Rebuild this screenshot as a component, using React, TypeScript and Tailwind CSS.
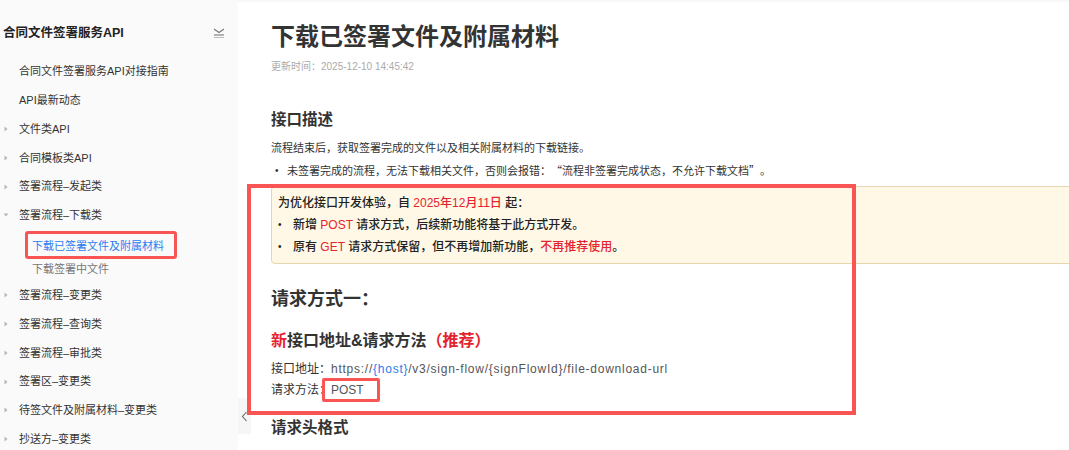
import React from 'react';

type NavItem = {
  label: string;
  caret?: 'right' | 'down';
  sub?: boolean;
  active?: boolean;
};

const topItems: NavItem[] = [
  { label: '合同文件签署服务API对接指南' },
  { label: 'API最新动态' },
  { label: '文件类API', caret: 'right' },
  { label: '合同模板类API', caret: 'right' },
  { label: '签署流程–发起类', caret: 'right' },
  { label: '签署流程–下载类', caret: 'down' },
];

const subItems: NavItem[] = [
  { label: '下载已签署文件及附属材料', sub: true, active: true },
  { label: '下载签署中文件', sub: true },
];

const restItems: NavItem[] = [
  { label: '签署流程–变更类', caret: 'right' },
  { label: '签署流程–查询类', caret: 'right' },
  { label: '签署流程–审批类', caret: 'right' },
  { label: '签署区–变更类', caret: 'right' },
  { label: '待签文件及附属材料–变更类', caret: 'right' },
  { label: '抄送方–变更类', caret: 'right' },
];

function Caret({ dir }: { dir: 'right' | 'down' }) {
  return (
    <svg width="6" height="6" viewBox="0 0 6 6" className="absolute left-[3px] top-1/2 -translate-y-1/2">
      {dir === 'right' ? (
        <path d="M1.5 0.5 L4.5 3 L1.5 5.5 Z" fill="#b5b5b5" />
      ) : (
        <path d="M0.5 1.5 L5.5 1.5 L3 4.5 Z" fill="#b5b5b5" />
      )}
    </svg>
  );
}

function NavRow({ item }: { item: NavItem }) {
  return (
    <div className={`relative flex items-center ${item.sub ? 'h-[23px]' : 'h-[28.8px]'}`}>
      {item.caret && <Caret dir={item.caret} />}
      <span
        className={`text-[11px] ${item.sub ? 'pl-[32px]' : 'pl-[19px]'} ${
          item.active ? 'text-[#2b7cf0]' : item.sub ? 'text-[#777]' : 'text-[#333]'
        }`}
      >
        {item.label}
      </span>
    </div>
  );
}

function Sidebar() {
  return (
    <aside className="w-[238px] h-[450px] shrink-0 overflow-hidden bg-[#fafafa]">
      <div className="h-[32px] mt-[17px] flex items-center justify-between pl-[3px] pr-[13px]">
        <span className="text-[12.5px] font-semibold text-[#222]">合同文件签署服务API</span>
        <svg width="12" height="11" viewBox="0 0 12 11" fill="none">
          <path d="M1 1 L6 4.5 L11 1" stroke="#777" strokeWidth="1.1" />
          <line x1="1" y1="7" x2="11" y2="7" stroke="#777" strokeWidth="1.1" />
          <line x1="1" y1="9.5" x2="11" y2="9.5" stroke="#bbb" strokeWidth="1" />
        </svg>
      </div>
      <nav className="mt-[8px]">
        {topItems.map((item, i) => (
          <NavRow key={`t${i}`} item={item} />
        ))}
        <div className="pt-[5px]">
          {subItems.map((item, i) => (
            <NavRow key={`s${i}`} item={item} />
          ))}
        </div>
        {restItems.map((item, i) => (
          <NavRow key={`r${i}`} item={item} />
        ))}
      </nav>
    </aside>
  );
}

const cjk = "font-['Noto_Sans_CJK_SC',sans-serif] inline-block w-[11px]";

function Main() {
  return (
    <main className="relative flex-1 h-[450px] overflow-hidden bg-white pl-[33px] shadow-[inset_0_3px_3px_-2px_rgba(0,0,0,0.06)]">
      <div className="absolute left-0 top-[398px] w-[13px] h-[36px] bg-[#f6f6f6] flex items-center justify-center">
        <svg width="7" height="11" viewBox="0 0 7 11" fill="none">
          <path d="M5.5 1 L1.5 5.5 L5.5 10" stroke="#666" strokeWidth="1.1" />
        </svg>
      </div>

      <h1 className="pt-[21px] text-[24px] leading-[32px] font-bold text-[#333]">下载已签署文件及附属材料</h1>
      <div className="mt-[7px] text-[10px] leading-[14px] text-[#aaa]">更新时间：2025-12-10 14:45:42</div>

      <h2 className="mt-[34px] text-[15.5px] leading-[24px] font-bold text-[#333]">接口描述</h2>
      <p className="mt-[6px] text-[11px] leading-[20px] text-[#333]">流程结束后，获取签署完成的文件以及相关附属材料的下载链接。</p>
      <ul className="mt-[2px] text-[11px] leading-[20px] text-[#333]">
        <li className="flex items-center">
          <span className="w-[16px] pl-[4px] text-[10px]">•</span>
          <span>
            未签署完成的流程，无法下载相关文件，否则会报错：<span className={`${cjk} text-right`}>“</span>流程非签署完成状态，不允许下载文档
            <span className={`${cjk} text-left`}>”</span>。
          </span>
        </li>
      </ul>

      <div className="mt-[5px] mr-[-20px] rounded-l-[4px] border border-[#e4d6ad] bg-[#fff8e6] pl-[6px] pt-[5px] pb-[5px] text-[12px] leading-[22px] font-medium text-[#222]">
        <div>
          为优化接口开发体验，自 <span className="text-[#e5232e]">2025年12月11日</span> 起：
        </div>
        <div className="flex items-center">
          <span className="w-[15px] text-[10px]">•</span>
          <span>
            新增 <span className="text-[#e5232e]">POST</span> 请求方式，后续新功能将基于此方式开发。
          </span>
        </div>
        <div className="flex items-center">
          <span className="w-[15px] text-[10px]">•</span>
          <span>
            原有 <span className="text-[#e5232e]">GET</span> 请求方式保留，但不再增加新功能，
            <span className="text-[#e5232e]">不再推荐使用</span>。
          </span>
        </div>
      </div>

      <h2 className="mt-[22px] text-[18px] leading-[26px] font-semibold text-[#333]">请求方式一：</h2>
      <h3 className="mt-[17px] text-[16px] leading-[24px] font-semibold text-[#333]">
        <span className="text-[#e5232e]">新</span>接口地址&amp;请求方法<span className="text-[#e5232e]">（推荐）</span>
      </h3>
      <div className="mt-[6px] text-[12px] leading-[20px]">
        <span className="text-[#333]">接口地址：</span>
        <span className="text-[#555] tracking-[0.75px]">
          https://<span className="text-[#2b7cf0]">{'{host}'}</span>/v3/sign-flow/{'{signFlowId}'}/file-download-url
        </span>
      </div>
      <div className="mt-[1px] text-[12px] leading-[20px]">
        <span className="text-[#333]">请求方法：</span>
        <span className="text-[#555]">POST</span>
      </div>
      <h2 className="mt-[16px] text-[15.5px] leading-[24px] font-semibold text-[#333]">请求头格式</h2>
    </main>
  );
}

export default function App() {
  return (
    <div className="relative w-[1069px] h-[450px] overflow-hidden flex bg-white font-['Liberation_Sans','Noto_Sans_CJK_SC',sans-serif]">
      <Sidebar />
      <Main />
      {/* annotation boxes */}
      <div className="absolute left-[25px] top-[231px] w-[152px] h-[28px] rounded-[3px] border-[3px] border-[#f95555]" />
      <div className="absolute left-[247px] top-[184px] w-[609px] h-[231px] border-[4px] border-[#f95555]" />
      <div className="absolute left-[322px] top-[378px] w-[58px] h-[24px] rounded-[2px] border-[3px] border-[#f95555]" />
    </div>
  );
}
